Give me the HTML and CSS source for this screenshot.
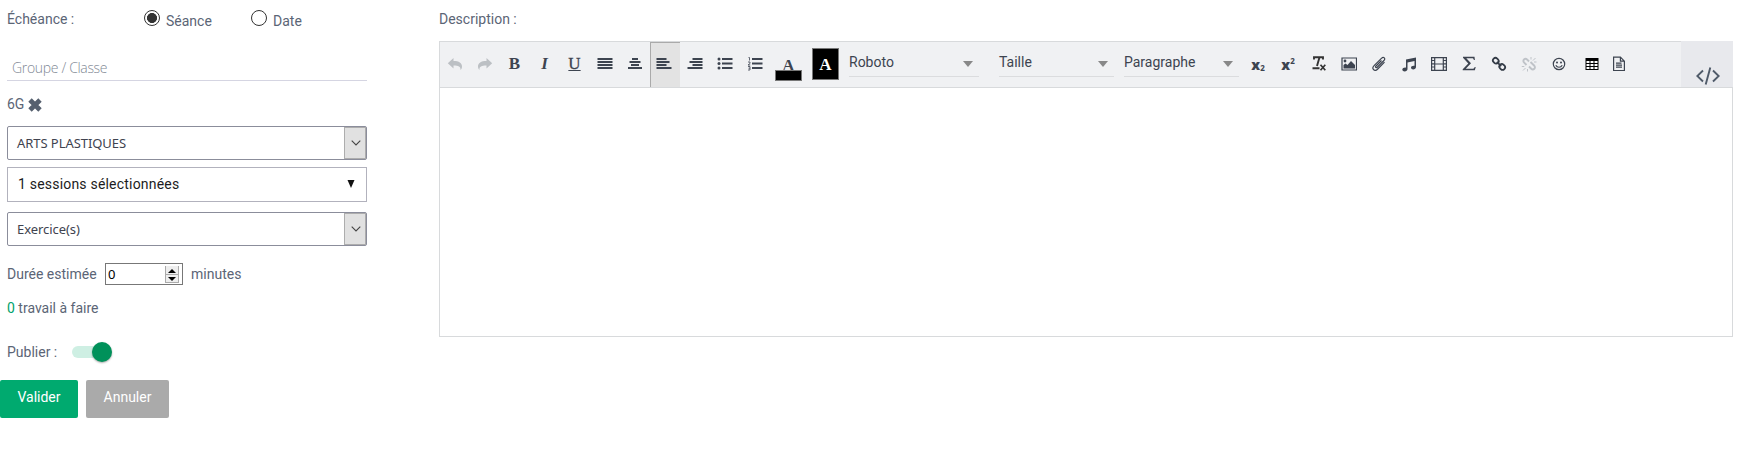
FILE: index.html
```html
<!DOCTYPE html>
<html lang="fr">
<head>
<meta charset="utf-8">
<title>Travail à faire</title>
<link rel="stylesheet" href="styles.css">
</head>
<body>
<main class="page">
  <form class="form">
    <div class="due"><span class="due-label">Échéance :</span>
      <span class="radio on"></span><span class="radio-text first">Séance</span>
      <span class="radio"></span><span class="radio-text">Date</span></div>
    <div class="group"><span>Groupe / Classe</span></div>
    <div class="tag"><span>6G</span><svg width="14" height="14" viewBox="0 0 14 14"><path d="M2 2l10 10M12 2L2 12" stroke="#56606f" stroke-width="4.800"/></svg></div>
    <div class="select"><span class="caps">ARTS PLASTIQUES</span><i class="drop"><svg width="10" height="6" viewBox="0 0 10 6"><path d="M.7.7L5 5 9.300.7" fill="none" stroke="#444" stroke-width="1.1"/></svg></i></div>
    <div class="sessions"><span>1 sessions sélectionnées</span><svg width="8" height="8" viewBox="0 0 8 8"><path d="M.5 0h7L4 8z" fill="#111"/></svg></div>
    <div class="select"><span class="low">Exercice(s)</span><i class="drop"><svg width="10" height="6" viewBox="0 0 10 6"><path d="M.7.7L5 5 9.300.7" fill="none" stroke="#444" stroke-width="1.1"/></svg></i></div>
    <div class="duration"><span class="duration-label">Durée estimée</span><span class="number"><b>0</b><i class="spin"><svg width="14" height="17" viewBox="0 0 14 17"><path d="M.5 0v17M13.500 0v17M0 8.500h14M0 16.500h14" stroke="#aaa"/><path d="M3 7h8L7 3zM3 11h8l-4 4z" fill="#000"/></svg></i></span><span>minutes</span></div>
    <div class="todo"><em>0</em> travail à faire</div>
    <div class="publish"><span>Publier :</span><span class="toggle"><i></i></span></div>
    <div class="actions"><span class="button ok">Valider</span><span class="button">Annuler</span></div>
  </form>
  <section class="description">
    <div class="title">Description :</div>
    <div class="editor">
      <div class="toolbar">
        <span class="tool off"><svg viewBox="0 0 16 16"><path d="M6.500 2v3c5.500 0 8.500 2 8.500 5.500 0 1.500-.5 2.800-1.500 3.500.3-3.600-2-4.600-7-4.600v3L.8 7.200z"/></svg></span>
        <span class="tool off"><svg viewBox="0 0 16 16"><path d="M9.500 2v3C4 5 1 7 1 10.500c0 1.500.5 2.800 1.500 3.500-.3-3.600 2-4.600 7-4.600v3l5.700-5.200z"/></svg></span>
        <span class="tool serif bold">B</span>
        <span class="tool serif italic">I</span>
        <span class="tool serif under">U</span>
        <span class="tool"><svg viewBox="0 0 16 16"><path d="M.5 2h15v2H.5zM.5 5h15v2H.5zM.5 8h15v2H.5zM.5 11h15v2H.5z"/></svg></span>
        <span class="tool"><svg viewBox="0 0 16 16"><path d="M5 2h6v2H5zM2.500 5h11v2h-11zM4 8h8v2H4zM1 11h14v2H1z"/></svg></span>
        <span class="tool active"><svg viewBox="0 0 16 16"><path d="M.5 2h10v2H.5zM.5 5h13v2H.5zM.5 8h10v2H.5zM.5 11h15v2H.5z"/></svg></span>
        <span class="tool"><svg viewBox="0 0 16 16"><path d="M5.500 2h10v2h-10zM2.500 5h13v2h-13zM5.500 8h10v2h-10zM.5 11h15v2H.5z"/></svg></span>
        <span class="tool"><svg viewBox="0 0 16 16"><path d="M5 2h10.500v2H5zM5 6.500h10.500v2H5zM5 11h10.500v2H5z"/><circle cx="2" cy="3" r="1.500"/><circle cx="2" cy="7.500" r="1.500"/><circle cx="2" cy="12" r="1.500"/></svg></span>
        <span class="tool"><svg viewBox="0 0 16 16"><path d="M5 2h10.500v2H5zM5 6.500h10.500v2H5zM5 11h10.500v2H5z"/><path d="M1.500 1.500h1V4.500M1 6h2v1.500L1 9h2.300M1 10.500h2V14H1M1.500 12.200H3" fill="none" stroke="#3d4450" stroke-width=".8"/></svg></span>
        <span class="ink"><b>A</b><i></i></span>
        <span class="paper">A</span>
        <span class="list font">Roboto<i></i></span>
        <span class="list size">Taille<i></i></span>
        <span class="list para">Paragraphe<i></i></span>
        <span class="tool script"><b>x</b><small class="sub">2</small></span>
        <span class="tool script"><b>x</b><small class="sup">2</small></span>
        <span class="tool"><svg viewBox="0 0 16 16"><path d="M3 3.500V1.300h9V3.500M8.500 1.300L6 10M1.500 12.300h7" fill="none" stroke="#333" stroke-width="1.900"/><path d="M9.500 8.800l4.800 5.500M14.300 8.800l-4.800 5.500" stroke="#333" stroke-width="1.700"/></svg></span>
        <span class="tool"><svg viewBox="0 0 16 16"><path class="line" d="M1 2h14.500v12H1z"/><circle cx="4" cy="5" r="1.400"/><path d="M2.500 12.500V9l2-1.500 2 1.500 3.500-4 4 4v3.500z"/></svg></span>
        <span class="tool"><svg viewBox="0 0 16 16"><path class="line" d="M10.500 4.500L5 10c-1 1-.1 2.300 1.200 1.200l6.500-6.400C15 2.500 12.700.2 10.400 2.400L3.100 9.600c-3 3 .4 6.500 3.400 3.600l7-7"/></svg></span>
        <span class="tool"><svg viewBox="0 0 16 16"><path d="M5 3.500L15 1.500V11c0 3-5 3.300-5 .6 0-1.500 2-2.200 3.500-1.800V5L6.500 6.400v6.700c0 3-5.200 3.100-5.200.5C1.300 12 3.500 11.300 5 11.700z"/></svg></span>
        <span class="tool"><svg viewBox="0 0 16 16"><path class="line" d="M.6 1.600h14.800v12.800H.6zM3.700 2v12M12.300 2v12M3.700 8h8.600M1 4.500h2.500M1 7.800h2.500M1 11h2.500M12.500 4.500H15M12.500 7.800H15M12.500 11H15"/></svg></span>
        <span class="tool"><svg viewBox="0 0 16 16"><path d="M2 .7h11.500l.4 3.300h-1C12.500 2.700 12 2.300 11 2.300H5.300L10 7.300l-5.200 5.500h6.700c1.200 0 1.800-.7 2.200-1.800h1l-.8 3.300H1.700v-1l5.600-5.700L2 1.700z"/></svg></span>
        <span class="tool"><svg viewBox="0 0 16 16"><g fill="none" stroke="#333b46" stroke-width="1.800"><rect x="2.300" y="1.800" width="5" height="6" rx="2.500" transform="rotate(-45 4.800 4.800)"/><rect x="8.700" y="7.900" width="5" height="6" rx="2.500" transform="rotate(-45 11.200 10.900)"/><path d="M5.800 5.800l4.400 4.300"/></g></svg></span>
        <span class="tool off"><svg viewBox="0 0 16 16"><g fill="none" stroke="#bfc3c8" stroke-width="1.900"><path d="M8 5.500L6.300 3.700C3.900 1.400.9 4.400 3.200 6.700L5.500 9M8 10.500l2 2c2.400 2.300 5.400-.7 3.100-3L9.500 6"/><path d="M10 1v2.500M14.500 2l-2.500 2.500M15.500 6H13M.8 10.500h2.500M2 14.500L4.500 12M6.500 15.500V13" stroke-width="1"/></g></svg></span>
        <span class="tool"><svg viewBox="0 0 16 16"><circle class="line" cx="8" cy="8" r="5.700"/><circle cx="6" cy="6.400" r="1"/><circle cx="10" cy="6.400" r="1"/><path class="line" d="M4.800 9.200c1.400 2.700 5 2.700 6.400 0"/></svg></span>
        <span class="tool table"><svg viewBox="0 0 16 16"><path fill="#000" d="M1.500 2h13v12h-13z"/><path fill="#fff" d="M2.500 5h3v2h-3zM6.500 5h3v2h-3zM10.500 5h3v2h-3zM2.500 8h3v2h-3zM6.500 8h3v2h-3zM10.500 8h3v2h-3zM2.500 11h3v2h-3zM6.500 11h3v2h-3zM10.500 11h3v2h-3z"/></svg></span>
        <span class="tool"><svg viewBox="0 0 16 16"><path class="line" d="M2.600 1.200h6.800l4 4v9.300H2.600zM9.400 1.500v3.700h3.700"/><path d="M5 6.500h5.500v1.300H5zM5 8.500h6v1.300H5zM5 10.500h6v1.300H5z"/></svg></span>
        <span class="source"><svg width="24" height="18" viewBox="0 0 24 18"><path d="M7 3.500L1.300 9 7 14.500M17 3.500L22.700 9 17 14.500M14.300.6L9.700 17.400" fill="none" stroke="#4f5a69" stroke-width="1.900"/></svg></span>
      </div>
    </div>
  </section>
</main>
</body>
</html>
```
FILE: styles.css
```css
* { box-sizing: border-box; }
body { margin: 0; background: #fff; color: #5b6576; font: 14px/20px Roboto, sans-serif; }
i, em { font-style: normal; }
svg { display: block; }
.page { display: flex; height: 465px; }
.form { width: 367px; flex: none; margin-right: 72px; }
.form > div { margin-left: 7px; }
.due { display: flex; padding-top: 9px; height: 54px; }
.due-label { width: 137px; }
.radio { width: 16px; height: 16px; border: 1px solid #333; border-radius: 50%; margin-top: 1px; }
.radio.on { background: radial-gradient(circle, #333 0 4.700px, #fff 5.300px); }
.radio-text { margin: 2px 0 0 6px; }
.first { width: 85px; }
.group { height: 27px; border-bottom: 1px solid #d5d5e2; padding: 4px 5px; color: #818995; font-family: "Open Sans", sans-serif; font-weight: 300; letter-spacing: -.33px; }
.tag { display: flex; gap: 4px; padding-top: 13px; height: 45px; }
.tag svg { margin-top: 4px; }
.select { display: flex; justify-content: space-between; height: 34px; border: 1px solid #8b8d9b; border-radius: 2px; color: #40434f; font: 13px/32px "Noto Sans", sans-serif; padding-left: 9px; }
.caps, .low { letter-spacing: -.06px; }
.drop { width: 22px; background: #e1e1e1; border: 1px solid #adadad; display: flex; align-items: center; padding-left: 6px; }
.sessions { display: flex; justify-content: space-between; align-items: center; height: 35px; margin-top: 7px; margin-bottom: 10px; border: 1px solid #b2b2bd; padding: 0 11px 2px 10px; color: #1c1c22; letter-spacing: .2px; }
.duration { display: flex; margin-top: 17px; height: 22px; line-height: 22px; }
.duration-label { width: 98px; }
.number { width: 78px; margin-right: 8px; border: 1px solid #777; padding: 2px 3px; display: flex; justify-content: space-between; color: #000; }
.number b { font: 13px/17px "Noto Sans", sans-serif; margin-left: -1px; }
.spin { background: #eee; height: 17px; }
.todo { margin-top: 13px; }
.todo em { color: #00a36c; }
.publish { display: flex; margin-top: 24px; height: 38px; }
.toggle { width: 38px; height: 12px; margin: 4px 0 0 15px; border-radius: 6px; background: #ceefe3; }
.toggle i { display: block; width: 20px; height: 20px; border-radius: 50%; background: #00915a; margin: -4px 0 0 20px; box-shadow: 0 1px 2px #0005; }
.form > .actions { display: flex; gap: 8px; margin-left: 0; }
.button { width: 83px; height: 38px; line-height: 34px; border-radius: 2px; background: #aaa; color: #fff; text-align: center; }
.ok { width: 78px; background: #00aa6f; }
.description { width: 1294px; }
.title { height: 41px; padding-top: 9px; }
.editor { height: 296px; border: 1px solid #d8dadc; }
.toolbar { display: flex; height: 46px; background: #f0f1f3; border-bottom: 1px solid #d8dadc; color: #3d4450; }
.tool { width: 30px; height: 45px; flex: none; display: flex; justify-content: center; align-items: center; padding: 0 1px 1px 0; }
.tool svg { width: 16px; height: 16px; flex: none; fill: #3d4450; }
.off svg { fill: #bcc0c4; }
.line { fill: none; stroke: #3d4450; stroke-width: 1.200; }
.active { background: #e3e3e3; border: solid #aaa; border-width: 1px 0 0 1px; padding: 0 3px 2px 0; }
.serif { font: 17px/20px "Liberation Serif", serif; }
.bold { font-weight: bold; }
.italic { font-style: italic; font-weight: bold; }
.under { text-decoration: underline; -webkit-text-stroke: .3px #3d4450; }
.ink { width: 27px; margin: 17px 10px 0 5px; text-align: center; }
.ink b { display: block; height: 11px; font: bold 17px/13px "Liberation Serif", serif; }
.ink i { display: block; height: 11px; background: #000; border: 1px solid #777; position: relative; }
.paper { width: 27px; height: 32px; margin: 6px 10px 0 0; background: #000; border: 1px solid #777; color: #fff; font: bold 17px/31px "Liberation Serif", serif; text-align: center; }
.list { display: flex; justify-content: space-between; height: 27px; margin-top: 8px; line-height: 25px; border-bottom: 1px solid #dbdcde; }
.list i { border: 5px solid transparent; border-top: 6px solid #888; border-bottom: 0; height: 6px; margin: 11px 6px 0 0; }
.font { width: 130px; margin-right: 20px; }
.size { width: 115px; margin-right: 10px; }
.para { width: 115px; margin-right: 5px; }
.script { font: bold 14px/16px "Noto Sans", sans-serif; padding-right: 2px; }
.script b { margin-top: 1px; }
.script small { font-size: 8px; }
.sub { margin-top: 7px; }
.sup { margin-top: -6px; }
.table { margin-left: 3px; margin-right: -3px; }
.source { width: 52px; height: 46px; margin: -1px -1px 0 auto; background: #e8e9ed; display: flex; justify-content: center; padding: 26px 0 0 2px; }
```
